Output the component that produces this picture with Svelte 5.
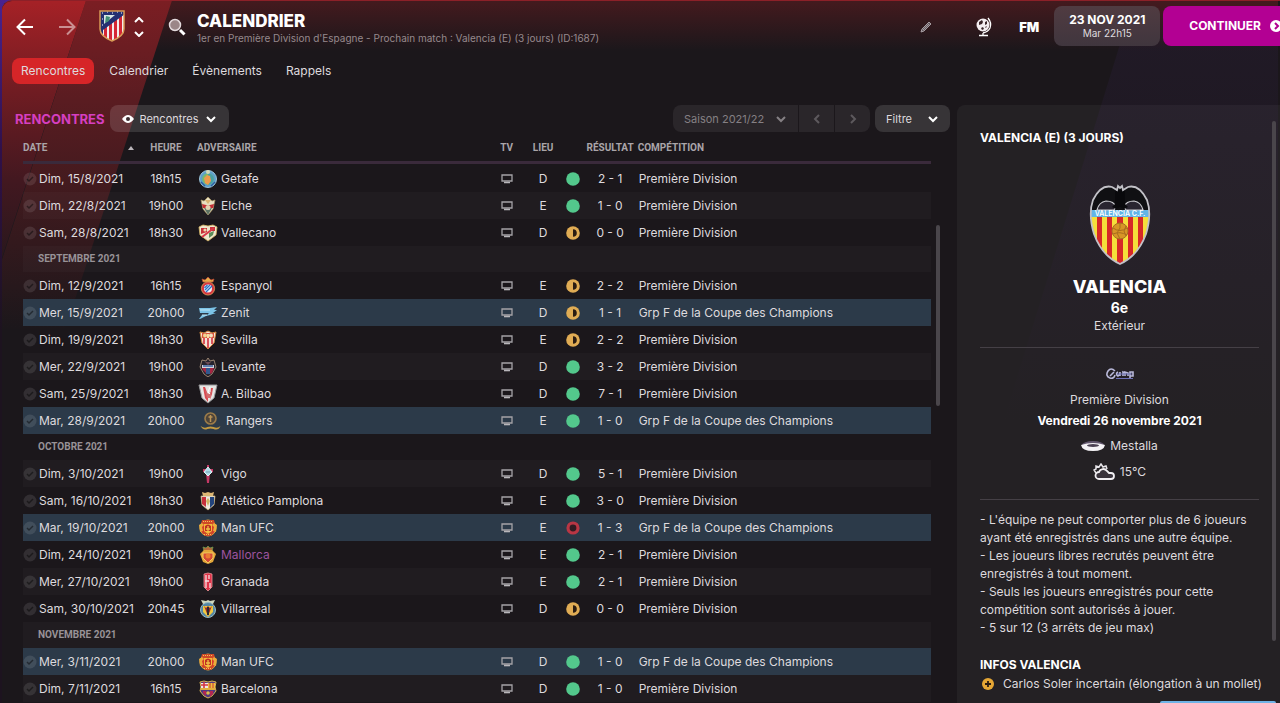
<script lang="ts">
  type Outcome = "win" | "draw" | "loss";

  interface Match {
    date: string;
    time: string;
    team: string;
    crest: string;
    venue: "D" | "E";
    outcome: Outcome;
    score: string;
    cup?: boolean;
    loan?: boolean;
  }

  interface Month {
    month: string;
  }

  const rows: (Match | Month)[] = [
    { date: "Dim, 15/8/2021", time: "18h15", team: "Getafe", crest: "getafe", venue: "D", outcome: "win", score: "2 - 1" },
    { date: "Dim, 22/8/2021", time: "19h00", team: "Elche", crest: "elche", venue: "E", outcome: "win", score: "1 - 0" },
    { date: "Sam, 28/8/2021", time: "18h30", team: "Vallecano", crest: "rayo", venue: "D", outcome: "draw", score: "0 - 0" },
    { month: "SEPTEMBRE 2021" },
    { date: "Dim, 12/9/2021", time: "16h15", team: "Espanyol", crest: "espanyol", venue: "E", outcome: "draw", score: "2 - 2" },
    { date: "Mer, 15/9/2021", time: "20h00", team: "Zenit", crest: "zenit", venue: "D", outcome: "draw", score: "1 - 1", cup: true },
    { date: "Dim, 19/9/2021", time: "18h30", team: "Sevilla", crest: "sevilla", venue: "E", outcome: "draw", score: "2 - 2" },
    { date: "Mer, 22/9/2021", time: "19h00", team: "Levante", crest: "levante", venue: "D", outcome: "win", score: "3 - 2" },
    { date: "Sam, 25/9/2021", time: "18h30", team: "A. Bilbao", crest: "bilbao", venue: "D", outcome: "win", score: "7 - 1" },
    { date: "Mar, 28/9/2021", time: "20h00", team: "Rangers", crest: "rangers", venue: "E", outcome: "win", score: "1 - 0", cup: true },
    { month: "OCTOBRE 2021" },
    { date: "Dim, 3/10/2021", time: "19h00", team: "Vigo", crest: "vigo", venue: "D", outcome: "win", score: "5 - 1" },
    { date: "Sam, 16/10/2021", time: "18h30", team: "Atlético Pamplona", crest: "osasuna", venue: "E", outcome: "win", score: "3 - 0" },
    { date: "Mar, 19/10/2021", time: "20h00", team: "Man UFC", crest: "man", venue: "E", outcome: "loss", score: "1 - 3", cup: true },
    { date: "Dim, 24/10/2021", time: "19h00", team: "Mallorca", crest: "mallorca", venue: "E", outcome: "win", score: "2 - 1", loan: true },
    { date: "Mer, 27/10/2021", time: "19h00", team: "Granada", crest: "granada", venue: "E", outcome: "win", score: "2 - 1" },
    { date: "Sam, 30/10/2021", time: "20h45", team: "Villarreal", crest: "villarreal", venue: "D", outcome: "draw", score: "0 - 0" },
    { month: "NOVEMBRE 2021" },
    { date: "Mer, 3/11/2021", time: "20h00", team: "Man UFC", crest: "man", venue: "D", outcome: "win", score: "1 - 0", cup: true },
    { date: "Dim, 7/11/2021", time: "16h15", team: "Barcelona", crest: "barca", venue: "D", outcome: "win", score: "1 - 0" },
  ];

  const tabs = ["Rencontres", "Calendrier", "Évènements", "Rappels"];
  const rules = [
    "- L'équipe ne peut comporter plus de 6 joueurs ayant été enregistrés dans une autre équipe.",
    "- Les joueurs libres recrutés peuvent être enregistrés à tout moment.",
    "- Seuls les joueurs enregistrés pour cette compétition sont autorisés à jouer.",
    "- 5 sur 12 (3 arrêts de jeu max)",
  ];

  let activeTab = $state("Rencontres");
  let view = $state("Rencontres");
  let season = $state("Saison 2021/22");
</script>

{#snippet chevron()}
  <svg class="chevron" viewBox="0 0 12 8" width="12" height="8" aria-hidden="true">
    <path d="M2 2l4 4 4-4" />
  </svg>
{/snippet}

{#snippet crest(name: string)}
  <svg class="crest" class:wide={name === "rangers"} viewBox="0 0 20 20" aria-hidden="true">
    {#if name === "getafe"}
      <circle cx="10" cy="10" r="8.500" fill="#5d9fca" stroke="#9cc3d8" />
      <circle cx="10" cy="10" r="5.800" fill="#79b96b" />
      <path d="M10 4.200a5.800 5.800 0 0 1 0 11.600z" fill="#48a0a4" />
      <path d="M6 9l3-3 3 1 1 5-3 4-3-2z" fill="#ee9a4b" />
      <path d="M3 13l4 4m6 0l4-4" stroke="#2c5f9d" stroke-width="1.400" />
      <circle cx="10" cy="3" r="2" fill="#d2d9b5" />
    {:else if name === "elche"}
      <path d="M3 4l3 1 4-4 4 4 3-1-2 9-5 6-5-6z" fill="#e8dfc0" stroke="#a99563" stroke-width=".7" />
      <path d="M4 8l4 1h4l4-1-1 4H5z" fill="#c22d34" />
      <path d="M6 12h8l-4 7z" fill="#5d7363" />
      <path d="M7 4h6l-3 4z" fill="#d9b474" />
      <circle cx="10" cy="11.500" r="2.500" fill="#e4d4b2" />
    {:else if name === "rayo"}
      <path d="M1 4l4-2 5 1 5-1 4 2-1 8-8 6-8-6z" fill="#efe8ce" stroke="#d8b663" stroke-width=".8" />
      <path d="M3 5h6v4l-6 2zM12 4h5v4h-5z" fill="#c9323a" />
      <path d="M4 14L16 5" stroke="#d93848" stroke-width="2" />
      <path d="M11 10l5-2-1 4-4 3z" fill="#5b8b58" />
      <circle cx="7" cy="7" r="1.600" fill="#ebd9b0" />
    {:else if name === "espanyol"}
      <path d="M5 6l-1-3 3 1 3-3 3 3 3-1-1 3z" fill="#e5ad4a" stroke="#c34b33" stroke-width=".7" />
      <circle cx="10" cy="12.500" r="6.600" fill="#d6373f" stroke="#e7b160" stroke-width=".7" />
      <circle cx="10" cy="12.500" r="4" fill="#edf1fb" />
      <path d="M7 14l5-5M8 16l6-6M6.500 12l3-3" stroke="#2875c5" stroke-width="1.300" />
    {:else if name === "zenit"}
      <path d="M1 5h11l7-1-3 3h3l-4 3h3l-6 2-4 1-6 3H1l3-4h5l2-2H2z" fill="#7cc3e6" />
      <path d="M2 7h10M4 12h5" stroke="#c2e7f4" />
    {:else if name === "sevilla"}
      <path d="M2 2l4 1 4-2 4 2 4-1-2 11-6 6-6-6z" fill="#f4e3d8" stroke="#d1863d" />
      <path d="M5 8h2v6H5zM9 8h2v10H9zM13 8h2v6h-2z" fill="#d9535b" />
      <path d="M4 3h12v5H4z" fill="#d8543c" />
      <circle cx="7" cy="5.500" r="2" fill="#f0d594" />
      <circle cx="13" cy="5.500" r="2" fill="#f0e1c0" />
      <path d="M9 4h2v4H9z" fill="#f5e2a2" />
    {:else if name === "levante"}
      <path d="M4 3l4 1 2-3 2 3 4-1 2 7-4 7-4 3-4-3-4-7z" fill="#27242e" stroke="#b89c82" stroke-width=".8" />
      <path d="M4 8h12v3H4z" fill="#d5d3d8" />
      <path d="M4 11h4v5l-3-3zM12 11h4l-2 5-2 1z" fill="#a72743" />
      <path d="M8 11h4v6H8z" fill="#32588d" />
      <path d="M5 9h10" stroke="#3a62a0" stroke-width="1.500" />
      <path d="M7 5h6l-3 3z" fill="#6b4a54" />
    {:else if name === "bilbao"}
      <path d="M1 1h18l-3 13-6 5-6-5z" fill="#e5e4e2" stroke="#969799" />
      <path d="M5 3h2l3 8v7l-3-4zM13 4h2l-1 6-2 6z" fill="#d94950" />
      <path d="M7 6l3 4 4-3-2 7H9z" fill="#d26a6c" />
      <path d="M12 3l-2 5 2 2" stroke="#fff" fill="none" />
    {:else if name === "rangers"}
      <circle cx="10" cy="7.500" r="5.500" fill="#4e4439" stroke="#9b7b49" stroke-width="1.600" />
      <path d="M10 4v7M8 6h4" stroke="#ba9355" stroke-width="1.500" />
      <path d="M0 15q4 3 7 1 3-1 6 0 4 2 7-1-2 5-7 3-3-1-6 0-4 2-7-3z" fill="#c59b42" />
    {:else if name === "vigo"}
      <path d="M9 1h2v4h4v3l-3 1-1 10H9L8 9 5 8V5h4z" fill="#c43865" />
      <path d="M10 3l4 5-4 4-4-4z" fill="#a8dce8" stroke="#e3eff3" />
      <path d="M8 8h4" stroke="#7999b0" />
    {:else if name === "osasuna"}
      <path d="M5 5L4 1l3 1 3-1 3 1 3-1-1 4z" fill="#dfb874" />
      <path d="M3 5h14l-1 9-6 5-6-5z" fill="#efe9df" stroke="#c8b17c" stroke-width=".7" />
      <path d="M4 6h4v10l-4-3z" fill="#c7303c" />
      <path d="M12 6h4v7l-4 4z" fill="#23447c" />
      <path d="M10 7l2 3-2 5-2-5z" fill="#d0b665" />
    {:else if name === "man"}
      <circle cx="10" cy="10" r="8" fill="#d73a2c" stroke="#dfa443" />
      <path d="M4 2h12l1 4H3zM4 14h12l-3 4H7z" fill="#cf4a28" />
      <path d="M1 7l3-2 2 2-2 2 1 4-3 1zM19 7l-3-2-2 2 2 2-1 4 3 1z" fill="#ebac3b" />
      <path d="M6 6h8v7l-4 3-4-3z" fill="#f4b93a" />
      <path d="M7 8q3-3 6 0v5H7z" fill="#be3023" />
      <path d="M10 8v6M8 11h4" stroke="#f0c246" stroke-width="1.300" />
      <path d="M5 3.500h10M6 16.500h8" stroke="#f4c356" stroke-dasharray="1 1" />
    {:else if name === "mallorca"}
      <path d="M6 6L5 2l3 1 2-2 2 2 3-1-1 4z" fill="#b5673b" stroke="#6e994e" stroke-width=".8" />
      <path d="M2 9l4-4h8l4 4-3 8-5 2-5-2z" fill="#e3a63a" />
      <path d="M5 8h10v5l-5 5-5-5z" fill="#d54936" stroke="#f3cc5e" />
      <circle cx="10" cy="11" r="2.500" fill="#ed7c31" />
    {:else if name === "granada"}
      <path d="M6 2l4-1 4 1v13l-4 4-4-4z" fill="#df3349" stroke="#e99598" stroke-width=".8" />
      <path d="M8 3v13M11 3v4M12 11v5M7 9h4" stroke="#f4dfdf" stroke-width="1.300" />
    {:else if name === "villarreal"}
      <path d="M5 5L3 1l5 1 2-1 2 1 5-1-2 4z" fill="#d0d8bd" />
      <circle cx="10" cy="11" r="7.500" fill="#5487a5" stroke="#98bac1" />
      <path d="M5 7h10v6l-5 5-5-5z" fill="#efc840" />
      <path d="M6 7l4 10 4-10-2 2-2-2-2 2z" fill="#9d2928" />
      <path d="M9 8h2v8H9z" fill="#2b2930" />
    {:else if name === "barca"}
      <path d="M2 3l4-1 4 1 4-1 4 1-1 5 1 4-4 5-4 2-4-2-4-5 1-4z" fill="#513a80" stroke="#d9b350" />
      <path d="M3 4h7v5H3z" fill="#eee9e6" />
      <path d="M6 3v6M3 6h7" stroke="#d33542" stroke-width="1.600" />
      <path d="M10 4h7v5h-7z" fill="#efbe3f" />
      <path d="M12 4v5M15 4v5" stroke="#c43538" />
      <path d="M5 12h3v5l-3-3zM12 12h3v3l-3 3z" fill="#b42650" />
      <path d="M3 10h14" stroke="#e1ae3d" stroke-width="2" />
      <circle cx="10" cy="14" r="1.800" fill="#dfba49" />
    {/if}
  </svg>
{/snippet}

{#snippet outcomeIcon(outcome: Outcome)}
  <svg class="outcome" viewBox="0 0 14 14" width="14" height="14" role="img" aria-label={outcome}>
    {#if outcome === "win"}
      <circle cx="7" cy="7" r="6.800" fill="#53c88c" />
    {:else if outcome === "draw"}
      <circle cx="7" cy="7" r="6.800" fill="#e0ac54" />
      <path d="M7 3.200a3.800 3.800 0 0 1 0 7.600z" fill="#2a1c12" />
    {:else}
      <circle cx="7" cy="7" r="5" fill="#321b22" stroke="#b93644" stroke-width="3.200" />
    {/if}
  </svg>
{/snippet}

<div class="app">
  <svg class="backdrop" viewBox="0 0 1280 703" preserveAspectRatio="xMinYMin slice" aria-hidden="true">
    <defs>
      <linearGradient id="band-one" x1="0" y1="0" x2="0" y2="1">
        <stop offset="0" stop-color="#a52126" />
        <stop offset="0.300" stop-color="#701c22" />
        <stop offset="0.600" stop-color="#421820" />
        <stop offset="1" stop-color="#1b171b" />
      </linearGradient>
      <linearGradient id="band-two" x1="0" y1="0" x2="0" y2="1">
        <stop offset="0" stop-color="#7b1e23" />
        <stop offset="0.300" stop-color="#5a1c21" />
        <stop offset="0.600" stop-color="#3f1a1e" />
        <stop offset="1" stop-color="#1b171b" />
      </linearGradient>
      <linearGradient id="glow" x1="0" y1="0" x2="0" y2="1">
        <stop offset="0" stop-color="#441a1e" />
        <stop offset="1" stop-color="#441a1e" stop-opacity="0" />
      </linearGradient>
      <linearGradient id="night" x1="0" y1="0" x2="0" y2="1">
        <stop offset="0" stop-color="#211a27" />
        <stop offset="1" stop-color="#1b171b" />
      </linearGradient>
    </defs>
    <path d="M1135 0H1280V420H1005z" fill="url(#night)" />
    <rect width="1280" height="50" fill="url(#glow)" />
    <path d="M86 0h86L65 330H-21z" fill="url(#band-two)" />
    <path d="M0 0h86L-12 300H0z" fill="url(#band-one)" />
  </svg>

  <header class="topbar">
    <div class="history">
      <button class="icon-btn" aria-label="Précédent">
        <svg viewBox="0 0 18 18" width="18" height="18"><path d="M17 9H2M9 1.500L1.500 9 9 16.500" /></svg>
      </button>
      <button class="icon-btn dim" aria-label="Suivant">
        <svg viewBox="0 0 18 18" width="18" height="18"><path d="M1 9h15M9 1.500L16.500 9 9 16.500" /></svg>
      </button>
    </div>
    <svg class="club" viewBox="0 0 26 32" width="26" height="32" role="img" aria-label="Atlético">
      <defs>
        <clipPath id="shield"><path d="M1 1h24v18q0 7-12 12Q1 26 1 19z" /></clipPath>
      </defs>
      <g clip-path="url(#shield)">
        <path d="M0 0h26v32H0z" fill="#f3eced" />
        <path d="M5 12h3v20H5zM10 10h3v22h-3zM15 8h3v24h-3zM20 5h3v27h-3z" fill="#d52635" />
        <path d="M0 0h26v4L4 20v6H0z" fill="#252f72" />
        <path d="M5 5h11L5 14z" fill="#d9e6e3" />
        <path d="M7 6l4 1-1 4-4 2z" fill="#448f76" />
        <path d="M3 3h1M8 2h1M13 3h1M18 2h1M22 3h1M3 9h1M3 15h1" stroke="#fff" />
      </g>
      <path d="M1 1h24v18q0 7-12 12Q1 26 1 19z" fill="none" stroke="#d89a55" stroke-width="1.500" />
    </svg>
    <button class="icon-btn stepper" aria-label="Changer d'équipe">
      <svg viewBox="0 0 10 20" width="10" height="20"><path d="M1 5l4-4 4 4M1 15l4 4 4-4" /></svg>
    </button>
    <button class="icon-btn search" aria-label="Rechercher">
      <svg viewBox="0 0 18 18" width="18" height="18">
        <circle cx="7" cy="7" r="5.500" fill="#9b8688" stroke="#e3dadd" stroke-width="1.500" />
        <path d="M12 12l4.500 4.500" stroke-width="3" />
      </svg>
    </button>
    <div class="heading">
      <h1>CALENDRIER</h1>
      <p>1er en Première Division d'Espagne - Prochain match : Valencia (E) (3 jours) (ID:1687)</p>
    </div>
    <div class="tools">
      <button class="icon-btn pencil" aria-label="Modifier">
        <svg viewBox="0 0 12 12" width="12" height="12">
          <path d="M1 11l1-3 7-7 2 2-7 7zM3 9l6-6" fill="#635a5f" stroke="#a69ca1" stroke-width="1" />
        </svg>
      </button>
      <button class="icon-btn globe" aria-label="Monde">
        <svg viewBox="0 0 18 20" width="18" height="20">
          <circle cx="8" cy="8" r="6.500" fill="#f3edf0" stroke="none" />
          <path d="M4 5l3-2 1 2-1 2-3 1zM10 5l2-1v3l-2 1zM6 11l2-1 1 2-2 1zM10 10l2-1-1 2z" fill="#3a2529" stroke="none" />
          <path d="M13 1q4 5 2 10-2 4-7 5M8 16v2M4 18.500h9" stroke-width="1.300" />
        </svg>
      </button>
      <button class="fm">FM</button>
    </div>
    <button class="date-btn">
      <strong>23 NOV 2021</strong>
      <span>Mar 22h15</span>
    </button>
    <button class="continue">
      CONTINUER
      <svg viewBox="0 0 12 12" width="12" height="12" aria-hidden="true">
        <circle cx="6" cy="6" r="6" fill="#fff" />
        <path d="M5 3l3 3-3 3" fill="none" stroke="#b0008f" stroke-width="2" />
      </svg>
    </button>
  </header>

  <nav class="tabs">
    {#each tabs as tab (tab)}
      <button class:active={activeTab === tab} onclick={() => (activeTab = tab)}>{tab}</button>
    {/each}
  </nav>

  <div class="content">
    <main>
      <div class="toolbar">
        <h2>RENCONTRES</h2>
        <label class="control">
          <svg viewBox="0 0 12 8" width="12" height="8" aria-label="Vue">
            <path d="M0 4q6-8 12 0-6 8-12 0z" fill="#fff" />
            <circle cx="6" cy="4" r="2" fill="#3c2e31" />
          </svg>
          <select bind:value={view}>
            <option>Rencontres</option>
          </select>
          {@render chevron()}
        </label>
        <div class="season">
          <label>
            <select bind:value={season} aria-label="Saison">
              <option>Saison 2021/22</option>
            </select>
            {@render chevron()}
          </label>
          <button aria-label="Saison précédente">
            <svg viewBox="0 0 8 12" width="8" height="12"><path d="M6 2L2 6l4 4" /></svg>
          </button>
          <button aria-label="Saison suivante">
            <svg viewBox="0 0 8 12" width="8" height="12"><path d="M2 2l4 4-4 4" /></svg>
          </button>
        </div>
        <button class="control filter">Filtre {@render chevron()}</button>
      </div>

      <div class="list">
        <table>
          <colgroup>
            <col class="c-date" />
            <col class="c-time" />
            <col class="c-team" />
            <col class="c-tv" />
            <col class="c-venue" />
            <col class="c-outcome" />
            <col class="c-score" />
            <col />
          </colgroup>
          <thead>
            <tr>
              <th>
                <span class="sort">
                  DATE
                  <svg viewBox="0 0 6 4" width="6" height="4" aria-hidden="true"><path d="M0 4l3-4 3 4z" fill="#bcb7bb" /></svg>
                </span>
              </th>
              <th class="mid">HEURE</th>
              <th class="team-head">ADVERSAIRE</th>
              <th class="mid">TV</th>
              <th class="mid">LIEU</th>
              <th></th>
              <th class="mid">RÉSULTAT</th>
              <th>COMPÉTITION</th>
            </tr>
          </thead>
          <tbody>
            {#each rows as row}
              {#if "month" in row}
                <tr class="month"><td colspan="8">{row.month}</td></tr>
              {:else}
                <tr class:cup={row.cup}>
                  <td>
                    <span class="date">
                      <svg viewBox="0 0 14 14" width="14" height="14" aria-hidden="true">
                        <circle cx="7" cy="7" r="6.500" fill="#fff" fill-opacity="0.100" />
                        <path d="M4 7l2 2 4-4" fill="none" stroke="#000" stroke-opacity="0.450" stroke-width="1.500" />
                      </svg>
                      {row.date}
                    </span>
                  </td>
                  <td class="mid">{row.time}</td>
                  <td>
                    <span class="team" class:loan={row.loan}>{@render crest(row.crest)}{row.team}</span>
                  </td>
                  <td class="mid">
                    <svg class="tv" viewBox="0 0 12 10" width="12" height="10" role="img" aria-label="TV">
                      <path d="M1 1h10v6H1z" fill="none" stroke="#a5a3a7" stroke-width="1.300" />
                      <path d="M3 8.500h6" stroke="#b8b6ba" stroke-width="1.600" />
                    </svg>
                  </td>
                  <td class="mid">{row.venue}</td>
                  <td class="mid">{@render outcomeIcon(row.outcome)}</td>
                  <td class="mid">{row.score}</td>
                  <td class="competition">{row.cup ? "Grp F de la Coupe des Champions" : "Première Division"}</td>
                </tr>
              {/if}
            {/each}
          </tbody>
        </table>
        <div class="scroll-thumb"></div>
      </div>
    </main>

    <aside>
      <h3>VALENCIA (E) (3 JOURS)</h3>
      <div class="opponent">
        <svg viewBox="0 0 62 82" width="62" height="82" role="img" aria-label="Valencia C.F.">
          <defs>
            <clipPath id="oval"><path d="M31 81Q13 73 5 51-1 31 4 17 12 1 23 4l5 3 1-4 2 2 2-2 1 4 5-3q11-3 19 13 5 14-1 34-8 22-26 30z" /></clipPath>
          </defs>
          <g clip-path="url(#oval)">
            <path d="M0 0h62v82H0z" fill="#101013" />
            <path d="M0 34h62v48H0z" fill="#f5df3a" />
            <path d="M8 34h5v48H8zM18 34h5v48h-5zM28 34h6v48h-6zM39 34h5v48h-5zM49 34h5v48h-5z" fill="#d62927" />
            <path d="M0 27h62v7H0z" fill="#63b5e7" />
            <path d="M8 27q2-8 9-9 8 0 10 6l-2 3zM54 27q-2-8-9-9-8 0-10 6l2 3z" fill="#292530" stroke="#c9c9ce" stroke-width="1.200" />
            <path d="M26 4l3 3h4l3-3v17l3 3-4 2-4-2-4 2-4-2 3-3z" fill="#09090c" />
          </g>
          <path d="M31 81Q13 73 5 51-1 31 4 17 12 1 23 4l5 3 1-4 2 2 2-2 1 4 5-3q11-3 19 13 5 14-1 34-8 22-26 30z" fill="none" stroke="#c2c1c7" stroke-width="1.800" />
          <circle cx="31" cy="48" r="8" fill="#d79526" stroke="#a86d21" />
          <path d="M24 45q7 5 14 0M24 51q7-3 14 1M31 40v5l-3 5 3 6M37 43l-2 5 2 5" fill="none" stroke="#a96c1e" />
          <text x="31" y="33" text-anchor="middle">VALENCIA C.F.</text>
        </svg>
        <strong class="name">VALENCIA</strong>
        <strong class="rank">6e</strong>
        <span>Extérieur</span>
      </div>
      <div class="fixture">
        <svg viewBox="0 0 28 12" width="28" height="12" aria-hidden="true">
          <path d="M9 3Q5-1 2 3q-3 5 2 7 4 1 5-3M4 8l4-4M12 4q-3 2 0 4 2-1 2-4v4M17 8V4l2 1v3V4l3 1v3M24 11V4h3v4h-3" fill="none" stroke="#b9b9d9" stroke-width="1.600" />
          <path d="M10 10.500h17M11 6h15" stroke="#6d70b4" stroke-width="1.200" />
        </svg>
        <span class="league">Première Division</span>
        <strong>Vendredi 26 novembre 2021</strong>
        <span class="line">
          <svg viewBox="0 0 24 12" width="24" height="12" aria-hidden="true">
            <ellipse cx="12" cy="5" rx="11" ry="4" fill="#62566d" />
            <path d="M0 5q12-4 24 0-1 6-12 6T0 5z" fill="#f4f2f5" />
            <ellipse cx="12" cy="5.500" rx="6" ry="1.500" fill="#4b4052" />
          </svg>
          Mestalla
        </span>
        <span class="line weather">
          <svg viewBox="0 0 22 18" width="22" height="18" aria-hidden="true">
            <path d="M3 10L1 7l2-1V3l3 1 2-3 2 3 3-1 1 3" fill="none" stroke="#e7e5e9" stroke-width="1.500" />
            <path d="M6 16a3.500 3.500 0 0 1 0-7 4.500 4.500 0 0 1 8-1l2 2h2a3 3 0 0 1 0 6z" fill="#39333b" stroke="#f1eff2" stroke-width="1.800" />
          </svg>
          15°C
        </span>
      </div>
      <div class="rules">
        {#each rules as rule}
          <p>{rule}</p>
        {/each}
      </div>
      <h3 class="infos">INFOS VALENCIA</h3>
      <p class="injury">
        <svg viewBox="0 0 12 12" width="12" height="12" aria-hidden="true">
          <circle cx="6" cy="6" r="6" fill="#e6a735" />
          <path d="M6 3v6M3 6h6" stroke="#2b1d13" stroke-width="1.800" />
        </svg>
        Carlos Soler incertain (élongation à un mollet)
      </p>
      <div class="side-thumb"></div>
      <div class="notice"></div>
    </aside>
  </div>
</div>

<style>
  :global(body) {
    background: linear-gradient(#4a2391, #30104a 150px, #1d131f 330px);
  }

  .app {
    position: relative;
    display: flex;
    flex-direction: column;
    box-sizing: border-box;
    height: 100vh;
    margin-left: 2px;
    overflow: hidden;
    border-top: 1px solid #8c2028;
    border-radius: 10px 0 0 0;
    background: #1b171b;
    color: #dedade;
    font-family: Inter, "Liberation Sans", sans-serif;
    font-size: 12px;
    line-height: 18px;
  }

  .backdrop {
    position: absolute;
    top: 0;
    left: -2px;
    width: 100%;
    height: 100%;
  }

  h1,
  h2,
  h3,
  p {
    margin: 0;
  }

  button,
  select {
    padding: 0;
    border: 0;
    background: none;
    color: inherit;
    font: inherit;
    cursor: pointer;
  }

  select {
    appearance: none;
    outline: none;
  }

  svg {
    flex: none;
  }

  .topbar {
    position: relative;
    display: flex;
    align-items: center;
    height: 40px;
    margin-top: 5px;
    margin-right: -2px;
    padding-left: 14px;
  }

  .icon-btn {
    display: flex;
    color: #fff;
  }

  .icon-btn svg {
    fill: none;
    stroke: currentColor;
    stroke-width: 2;
  }

  .icon-btn.dim {
    opacity: 0.5;
  }

  .history,
  .stepper,
  .search,
  .tools {
    padding-top: 2px;
  }

  .history {
    display: flex;
    gap: 24px;
  }

  .club {
    margin-left: 23px;
  }

  .stepper {
    margin-left: 9px;
  }

  .search {
    margin-left: 24px;
  }

  .heading {
    flex: 1;
    min-width: 0;
    margin-left: 11px;
    padding-top: 5px;
  }

  h1 {
    color: #fff;
    font-size: 17px;
    font-weight: 800;
    line-height: 18px;
  }

  .heading p {
    color: #96898d;
    font-size: 10px;
    line-height: 16px;
    white-space: nowrap;
  }

  .tools {
    display: flex;
    align-items: center;
    margin-right: 15px;
  }

  .globe {
    margin: 0 26px 0 43px;
  }

  .fm {
    color: #fff;
    font-size: 13px;
    font-weight: 900;
  }

  .date-btn {
    display: flex;
    flex-direction: column;
    align-items: center;
    justify-content: center;
    width: 106px;
    height: 40px;
    margin-right: 3px;
    border-radius: 8px;
    background: linear-gradient(#503b41, #40363e);
    font-size: 10px;
    line-height: 13px;
  }

  .date-btn strong {
    color: #fff;
    font-size: 12px;
    line-height: 14px;
  }

  .continue {
    display: flex;
    align-items: center;
    gap: 9px;
    height: 40px;
    padding-left: 26px;
    border-radius: 8px 0 0 8px;
    background: #b30093;
    color: #fff;
    font-weight: 700;
  }

  .tabs {
    position: relative;
    display: flex;
    gap: 6px;
    margin-top: 12px;
    padding-left: 10px;
  }

  .tabs button {
    height: 26px;
    padding: 0 9px;
    border-radius: 8px;
  }

  .tabs .active {
    background: #d62528;
  }

  .content {
    position: relative;
    display: flex;
    flex: 1;
    gap: 26px;
    min-height: 0;
    margin-top: 21px;
  }

  main {
    display: flex;
    flex: 1;
    flex-direction: column;
    min-width: 0;
    padding-left: 13px;
  }

  .toolbar {
    display: flex;
    align-items: center;
    height: 27px;
    margin-right: -19px;
  }

  h2 {
    margin-right: 5px;
    color: #d63fc1;
    font-size: 13px;
    font-weight: 700;
  }

  .chevron,
  .season svg {
    fill: none;
    stroke: currentColor;
    stroke-width: 2;
  }

  .control {
    display: flex;
    align-items: center;
    gap: 6px;
    height: 27px;
    padding: 0 12px;
    border-radius: 8px;
    background: #ffffff20;
    font-size: 12px;
  }

  .control select {
    font-size: 11px;
  }

  .control .chevron {
    color: #fff;
  }

  .control.filter {
    gap: 15px;
    margin-left: 5px;
    padding: 0 11px;
    font-size: 11px;
  }

  .season {
    display: flex;
    gap: 1px;
    margin-left: auto;
    overflow: hidden;
    border-radius: 8px;
    color: #858084;
    font-size: 11px;
  }

  .season label,
  .season button {
    display: flex;
    align-items: center;
    justify-content: center;
    height: 27px;
    background: #2a262a;
  }

  .season label {
    gap: 10px;
    padding: 0 11px;
  }

  .season button {
    width: 35px;
    color: #5d595d;
  }

  .list {
    position: relative;
    padding-left: 8px;
  }

  table {
    width: 100%;
    border-spacing: 0;
    table-layout: fixed;
    white-space: nowrap;
  }

  .c-date {
    width: 118px;
  }

  .c-time {
    width: 50px;
  }

  .c-team {
    width: 33%;
  }

  .c-tv {
    width: 32px;
  }

  .c-venue {
    width: 41px;
  }

  .c-outcome {
    width: 19px;
  }

  .c-score {
    width: 55px;
  }

  th,
  td {
    box-sizing: border-box;
    height: 27px;
    padding: 0;
    text-align: left;
  }

  th {
    height: 33px;
    padding-bottom: 1px;
    background: linear-gradient(#3a2a3b, #3a2a3b) 0 29px / 100% 3px no-repeat;
    color: #aaa5a9;
    font-family: Roboto, "Liberation Sans", sans-serif;
    font-size: 10px;
    font-weight: 700;
  }

  .sort {
    display: flex;
    align-items: center;
    justify-content: space-between;
    padding-right: 7px;
  }

  .team-head {
    padding-left: 6px;
  }

  .mid {
    text-align: center;
  }

  tbody tr:nth-child(even) {
    background: #ffffff06;
  }

  tbody tr.cup {
    background: #2c3a49;
  }

  .month td {
    height: 26px;
    padding-left: 15px;
    color: #989297;
    font-family: Roboto, "Liberation Sans", sans-serif;
    font-size: 10px;
    font-weight: 700;
  }

  .date,
  .team {
    display: flex;
    align-items: center;
  }

  .date {
    gap: 2px;
  }

  .team {
    gap: 3px;
    padding-left: 7px;
  }

  .team.loan {
    color: #9d549f;
  }

  .crest {
    width: 20px;
    height: 20px;
  }

  .crest.wide {
    width: 25px;
    height: 20px;
  }

  .outcome,
  .tv {
    display: block;
    margin: 0 auto;
  }

  .competition {
    padding-left: 1px;
  }

  .scroll-thumb,
  .side-thumb {
    position: absolute;
    width: 4px;
    border-radius: 2px;
    background: #4a464b;
  }

  .scroll-thumb {
    top: 93px;
    right: -9px;
    height: 181px;
  }

  aside {
    position: relative;
    flex: none;
    box-sizing: border-box;
    width: 25%;
    min-width: 323px;
    padding: 24px 21px 0 23px;
    border-radius: 8px 0 0 0;
    background: #ffffff0b;
  }

  h3 {
    color: #fff;
    font-size: 12px;
    font-weight: 700;
    line-height: 18px;
  }

  .opponent,
  .fixture {
    display: flex;
    flex-direction: column;
    align-items: center;
    border-bottom: 1px solid #454046;
  }

  .opponent {
    padding: 36px 0 12px;
  }

  .opponent text {
    fill: #fff;
    font-size: 7px;
    font-weight: 600;
  }

  .name {
    margin-top: 10px;
    color: #fff;
    font-size: 18px;
    font-weight: 800;
    line-height: 24px;
  }

  .rank {
    color: #fff;
    font-size: 14px;
  }

  .fixture {
    padding: 20px 0 14px;
  }

  .fixture strong {
    color: #fff;
    line-height: 24px;
  }

  .league {
    margin-top: 11px;
  }

  .line {
    display: flex;
    align-items: center;
    gap: 5px;
    height: 26px;
  }

  .rules {
    padding-top: 11px;
    line-height: 18px;
  }

  .infos {
    margin-top: 19px;
  }

  .injury {
    display: flex;
    align-items: center;
    gap: 9px;
    height: 20px;
    padding-left: 2px;
    white-space: nowrap;
  }

  .side-thumb {
    top: 16px;
    right: 4px;
    height: 520px;
  }

  .notice {
    position: absolute;
    right: 4px;
    bottom: 0;
    width: 116px;
    height: 2px;
    border-radius: 4px 4px 0 0;
    background: #6fb3e6;
  }
</style>
